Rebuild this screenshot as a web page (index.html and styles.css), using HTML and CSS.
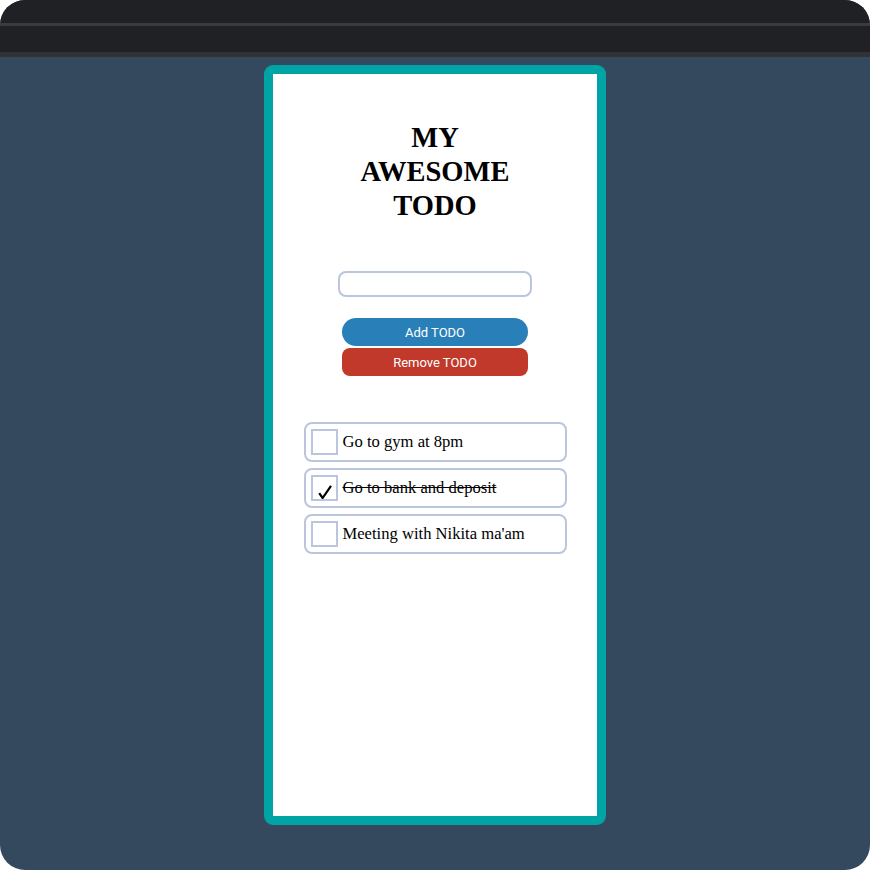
FILE: index.html
```html
<!DOCTYPE html>
<html lang="en">
<head>
<meta charset="utf-8">
<title>My Awesome TODO</title>
<link rel="stylesheet" href="styles.css">
</head>
<body>
<div class="frame">
  <div class="chrome">
    <div class="chrome-top"></div>
    <div class="chrome-line"></div>
    <div class="chrome-mid"></div>
    <div class="chrome-line2"></div>
  </div>
  <div class="stage">
    <div class="card">
      <h1 class="title">MY AWESOME TODO</h1>
      <input class="todo-input" type="text">
      <div class="actions">
        <button class="btn btn-add">Add TODO</button>
        <button class="btn btn-remove">Remove TODO</button>
      </div>
      <ul class="todo-list">
        <li class="todo-item">
          <span class="checkbox"></span>
          <span class="todo-text">Go to gym at 8pm</span>
        </li>
        <li class="todo-item">
          <span class="checkbox">
            <svg class="check" width="14" height="14" viewBox="0 0 14 14"><path d="M1.2 8.2 L4.6 13 L13 0.8" fill="none" stroke="#000" stroke-width="2.2" stroke-linejoin="miter"/></svg>
          </span>
          <span class="todo-text done">Go to bank and deposit</span>
        </li>
        <li class="todo-item">
          <span class="checkbox"></span>
          <span class="todo-text">Meeting with Nikita ma'am</span>
        </li>
      </ul>
    </div>
  </div>
</div>
</body>
</html>
```
FILE: styles.css
```css
html, body {
  margin: 0;
  padding: 0;
  background: #ffffff;
}

.frame {
  width: 870px;
  height: 870px;
  border-radius: 25px;
  overflow: hidden;
  background: #34495e;
  display: flex;
  flex-direction: column;
}

.chrome {
  flex: none;
  display: flex;
  flex-direction: column;
}

.chrome-top {
  height: 23px;
  background: #202125;
}

.chrome-line {
  height: 3px;
  background: #3a3b3f;
}

.chrome-mid {
  height: 26px;
  background: #202125;
}

.chrome-line2 {
  height: 5px;
  background: #313236;
}

.stage {
  flex: 1;
  display: flex;
  justify-content: center;
  align-items: flex-start;
  padding-top: 8px;
}

.card {
  width: 342px;
  height: 760px;
  box-sizing: border-box;
  border: 9px solid #00a4a5;
  border-radius: 9px;
  background: #ffffff;
  display: flex;
  flex-direction: column;
  align-items: center;
  padding-top: 46.6px;
}

.title {
  margin: 0;
  width: 180px;
  text-align: center;
  font-family: "Liberation Serif", "Times New Roman", serif;
  font-weight: bold;
  font-size: 28.5px;
  line-height: 34.2px;
  color: #000;
}

.todo-input {
  margin-top: 48px;
  width: 194px;
  height: 26px;
  box-sizing: border-box;
  border: 2px solid #b9c6dd;
  border-radius: 8px;
  background: #fff;
  outline: none;
  padding: 0 6px;
}

.actions {
  margin-top: 21px;
  display: flex;
  flex-direction: column;
  gap: 2px;
}

.btn {
  width: 186px;
  height: 28px;
  border: none;
  color: #ffffff;
  font-family: Roboto, "Liberation Sans", sans-serif;
  font-size: 13px;
  padding: 0;
  cursor: pointer;
}

.btn-add {
  background: #2980b9;
  border-radius: 14px;
}

.btn-remove {
  background: #c0392b;
  border-radius: 8px;
}

.todo-list {
  list-style: none;
  margin: 46px 0 0;
  padding: 0;
  display: flex;
  flex-direction: column;
  gap: 6px;
}

.todo-item {
  width: 263px;
  height: 40px;
  box-sizing: border-box;
  border: 2px solid #b9c6dd;
  border-radius: 8px;
  padding: 5px;
  display: flex;
  align-items: center;
  gap: 5px;
}

.checkbox {
  width: 27px;
  height: 26px;
  box-sizing: border-box;
  border: 2px solid #b9c6dd;
  display: flex;
  justify-content: center;
  align-items: flex-end;
  flex: none;
}

.check {
  display: block;
  margin-left: 1px;
}

.todo-text {
  font-family: "Liberation Serif", "Times New Roman", serif;
  font-size: 16.6px;
  color: #000;
}

.todo-text.done {
  text-decoration: line-through;
}
```
